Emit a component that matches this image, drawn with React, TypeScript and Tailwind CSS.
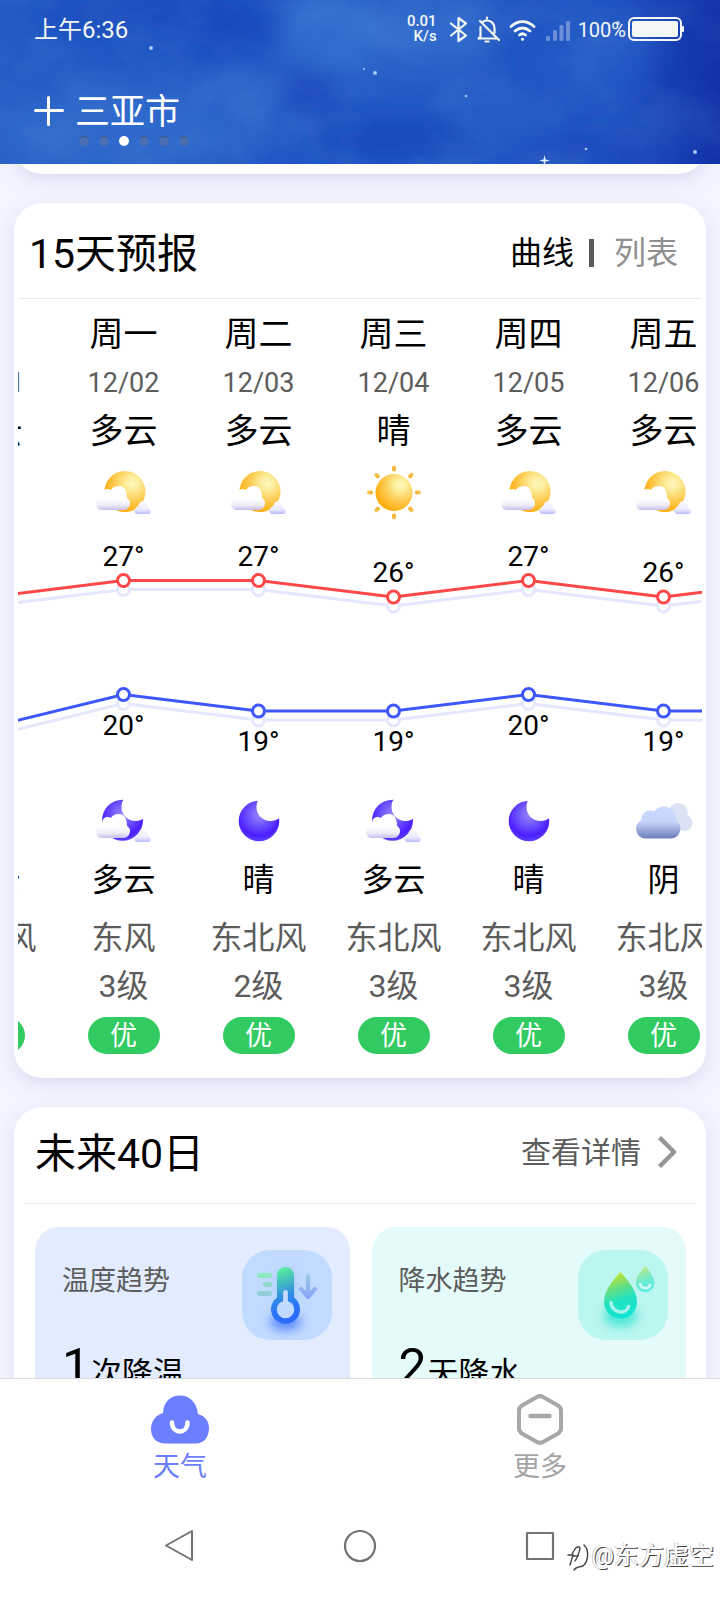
import React from 'react';

type DayIcon = 'sun' | 'sunCloud' | 'moon' | 'moonCloud' | 'overcast';

interface Day {
  week: string;
  date: string;
  dayText: string;
  dayIcon: DayIcon;
  high: number;
  low: number;
  nightIcon: DayIcon;
  nightText: string;
  wind: string;
  level: string;
  air: string;
}

const days: Array<Day> = [
  { week: '周日', date: '12/01', dayText: '多云', dayIcon: 'sunCloud', high: 26, low: 18, nightIcon: 'moonCloud', nightText: '多云', wind: '东北风', level: '3级', air: '优' },
  { week: '周一', date: '12/02', dayText: '多云', dayIcon: 'sunCloud', high: 27, low: 20, nightIcon: 'moonCloud', nightText: '多云', wind: '东风', level: '3级', air: '优' },
  { week: '周二', date: '12/03', dayText: '多云', dayIcon: 'sunCloud', high: 27, low: 19, nightIcon: 'moon', nightText: '晴', wind: '东北风', level: '2级', air: '优' },
  { week: '周三', date: '12/04', dayText: '晴', dayIcon: 'sun', high: 26, low: 19, nightIcon: 'moonCloud', nightText: '多云', wind: '东北风', level: '3级', air: '优' },
  { week: '周四', date: '12/05', dayText: '多云', dayIcon: 'sunCloud', high: 27, low: 20, nightIcon: 'moon', nightText: '晴', wind: '东北风', level: '3级', air: '优' },
  { week: '周五', date: '12/06', dayText: '多云', dayIcon: 'sunCloud', high: 26, low: 19, nightIcon: 'overcast', nightText: '阴', wind: '东北风', level: '3级', air: '优' },
  { week: '周六', date: '12/07', dayText: '多云', dayIcon: 'sunCloud', high: 27, low: 19, nightIcon: 'overcast', nightText: '阴', wind: '东北风', level: '3级', air: '优' },
];

// gradients shared by every weather icon on the page
const IconDefs: React.FC = () => (
  <svg className="absolute size-0" aria-hidden="true">
    <defs>
      <radialGradient id="sunFill" cx="0.68" cy="0.3" r="0.75">
        <stop offset="0" stopColor="#fdf7bd" />
        <stop offset="0.2" stopColor="#fcefa0" />
        <stop offset="0.6" stopColor="#fdc94c" />
        <stop offset="1" stopColor="#ffa908" />
      </radialGradient>
      <linearGradient id="rayFill" x1="0" y1="0" x2="0" y2="1">
        <stop offset="0" stopColor="#f3cd63" />
        <stop offset="1" stopColor="#f2ae23" />
      </linearGradient>
      <radialGradient id="moonFill" cx="0.5" cy="0.35" r="0.65">
        <stop offset="0" stopColor="#9f83ff" />
        <stop offset="0.35" stopColor="#735dfc" />
        <stop offset="0.8" stopColor="#4d1dff" />
        <stop offset="1" stopColor="#5a45fa" />
      </radialGradient>
      <linearGradient id="cloudFill" x1="0" y1="0" x2="0" y2="1">
        <stop offset="0.55" stopColor="#ffffff" />
        <stop offset="0.8" stopColor="#eeebf8" />
        <stop offset="1" stopColor="#c6bde9" />
      </linearGradient>
      <linearGradient id="smallCloudFill" x1="0" y1="0" x2="0" y2="1">
        <stop offset="0" stopColor="#fafaff" />
        <stop offset="0.65" stopColor="#ebeaff" />
        <stop offset="1" stopColor="#b9bafd" />
      </linearGradient>
      <linearGradient id="overcastFill" x1="0" y1="15" x2="0" y2="47" gradientUnits="userSpaceOnUse">
        <stop offset="0" stopColor="#cbdafe" />
        <stop offset="0.5" stopColor="#c5d3f8" />
        <stop offset="1" stopColor="#6d80bb" />
      </linearGradient>
      <mask id="moonMask">
        <rect width="60" height="60" fill="#fff" />
        <circle cx="41.5" cy="16" r="14" fill="#000" />
      </mask>
    </defs>
  </svg>
);

const Clouds: React.FC = () => (
  <>
    <path
      d="M43 51a3 3 0 0 1-2-5c1-2 3-2 4-5 1-3 5-4 7-1 1 2 2 4 3 5 2 2 3 6-1 6z"
      fill="url(#smallCloudFill)"
    />
    <path
      d="M8 47c-4 0-6-3-6-7 0-4 2-6 6-7 0-5 2-7 6-7 2 0 2 1 3 1 2-3 4-4 8-4 6 0 8 5 8 12 2 1 3 3 3 5 0 4-3 7-6 7z"
      fill="url(#cloudFill)"
    />
  </>
);

const WeatherIcon: React.FC<{ name: DayIcon }> = ({ name }) => (
  <svg className="size-15 shrink-0" viewBox="0 0 60 60" aria-hidden="true">
    {name === 'sun' && (
      <>
        <circle cx="30" cy="29.5" r="18.5" fill="url(#sunFill)" />
        {[0, 45, 90, 135, 180, 225, 270, 315].map(angle => (
          <rect
            key={angle}
            x="28"
            y="2.5"
            width="4"
            height="6"
            rx="1.8"
            fill="url(#rayFill)"
            transform={`rotate(${angle} 30 29.5)`}
          />
        ))}
      </>
    )}
    {name === 'sunCloud' && (
      <>
        <circle cx="31" cy="28.5" r="20.5" fill="url(#sunFill)" />
        <Clouds />
      </>
    )}
    {name === 'moon' && (
      <circle cx="30" cy="30" r="20.3" fill="url(#moonFill)" mask="url(#moonMask)" />
    )}
    {name === 'moonCloud' && (
      <>
        <circle cx="28.5" cy="29.3" r="20.5" fill="url(#moonFill)" mask="url(#moonMask)" />
        <Clouds />
      </>
    )}
    {name === 'overcast' && (
      <>
        <g fill="#dbe2f4">
          <circle cx="44" cy="22" r="10" />
          <circle cx="50.5" cy="32" r="8" />
        </g>
        <g fill="url(#overcastFill)">
          <circle cx="30" cy="27.5" r="12" />
          <circle cx="16" cy="28" r="8.5" />
          <rect x="2" y="28" width="44.5" height="19.5" rx="9.7" />
        </g>
      </>
    )}
  </svg>
);

const COLUMN = 135;
const STEP = 16.5;

const chartX = (index: number): number => index * COLUMN + COLUMN / 2;
const highY = (value: number): number => 57.5 + (27 - value) * STEP;
const lowY = (value: number): number => 171.5 + (20 - value) * STEP;

interface SeriesProps {
  ys: Array<number>;
  color: string;
  shadow?: boolean;
}

const Series: React.FC<SeriesProps> = ({ ys, color, shadow }) => (
  <g stroke={color} strokeWidth="3" transform={shadow ? 'translate(0 9)' : undefined}>
    <polyline fill="none" points={ys.map((y, i) => `${chartX(i)},${y}`).join(' ')} />
    {ys.map((y, i) => (
      <circle key={i} cx={chartX(i)} cy={y} r="6" fill="#fff" />
    ))}
  </g>
);

const TemperatureChart: React.FC = () => {
  const highs = days.map(day => highY(day.high));
  const lows = days.map(day => lowY(day.low));

  return (
    <svg className="block h-[268px] w-[945px]" viewBox="0 0 945 268">
      <Series ys={highs} color="#e4e7fe" shadow />
      <Series ys={lows} color="#e4e7fe" shadow />
      <Series ys={highs} color="#fe4747" />
      <Series ys={lows} color="#3d57fd" />
      <g fill="#000" fontSize="28" textAnchor="middle">
        {days.map((day, i) => (
          <React.Fragment key={day.date}>
            <text x={chartX(i)} y={highs[i] - 15}>{`${day.high}°`}</text>
            <text x={chartX(i)} y={lows[i] + 40}>{`${day.low}°`}</text>
          </React.Fragment>
        ))}
      </g>
    </svg>
  );
};

const Sky: React.FC = () => (
  <svg
    className="absolute inset-0 size-full"
    viewBox="0 0 720 164"
    preserveAspectRatio="xMidYMid slice"
    aria-hidden="true"
  >
    <defs>
      <linearGradient id="sky" x1="0" y1="0" x2="1" y2="0">
        <stop offset="0" stopColor="#245bc4" />
        <stop offset="0.3" stopColor="#1f55c2" />
        <stop offset="0.55" stopColor="#245bc5" />
        <stop offset="0.85" stopColor="#1d50bf" />
        <stop offset="1" stopColor="#1130a6" />
      </linearGradient>
      <filter id="soft" x="-50%" y="-50%" width="200%" height="200%">
        <feGaussianBlur stdDeviation="14" />
      </filter>
      <filter id="mist" x="0" y="0" width="100%" height="100%">
        <feTurbulence type="fractalNoise" baseFrequency="0.014 0.02" numOctaves="4" seed="7" />
        <feColorMatrix values="0 0 0 0 0.2  0 0 0 0 0.45  0 0 0 0 0.82  0 1.4 0 0 -0.5" />
      </filter>
    </defs>
    <rect width="720" height="164" fill="url(#sky)" />
    <g filter="url(#soft)">
      <ellipse cx="150" cy="10" rx="110" ry="22" fill="#1446ba" />
      <ellipse cx="215" cy="30" rx="60" ry="24" fill="#164abd" />
      <ellipse cx="120" cy="130" rx="130" ry="42" fill="#2e69cb" />
      <ellipse cx="230" cy="100" rx="50" ry="30" fill="#2a63c9" />
      <ellipse cx="330" cy="30" rx="46" ry="44" fill="#2f6dce" />
      <ellipse cx="430" cy="30" rx="56" ry="36" fill="#2d67cb" />
      <ellipse cx="310" cy="90" rx="30" ry="20" fill="#1a4abb" />
      <ellipse cx="400" cy="140" rx="90" ry="22" fill="#1748ba" />
      <ellipse cx="500" cy="115" rx="60" ry="22" fill="#285ec6" />
      <ellipse cx="590" cy="60" rx="60" ry="40" fill="#2459c4" />
      <ellipse cx="600" cy="155" rx="80" ry="16" fill="#1a4abb" />
    </g>
    <rect width="720" height="164" filter="url(#mist)" opacity="0.2" />
    <g fill="#a9c4f5">
      <circle cx="151" cy="48" r="2" />
      <circle cx="375" cy="73" r="2" />
      <circle cx="364" cy="69" r="1" />
      <circle cx="466" cy="96" r="1.3" />
      <circle cx="586" cy="149" r="1.3" />
      <circle cx="695" cy="152" r="2" />
      <circle cx="618" cy="23" r="2" />
    </g>
    <path d="M544.500 155l1 4.500 4.500 1-4.500 1-1 4.500-1-4.500-4.500-1 4.500-1z" fill="#e6eefc" />
  </svg>
);

const StatusBar: React.FC = () => (
  <div className="flex h-[58px] items-center justify-between pr-9 pl-[34px] text-[#f4f8f4]">
    <span className="pt-0.5 text-2xl">上午6:36</span>
    <div className="flex items-center">
      <div className="flex flex-col items-end text-[15px] leading-[15px] font-medium">
        <span>0.01</span>
        <span>K/s</span>
      </div>
      <svg
        className="ml-3 h-7 w-[97px]"
        viewBox="0 0 97 28"
        fill="none"
        stroke="currentColor"
        strokeWidth="2.2"
        strokeLinecap="round"
        strokeLinejoin="round"
        aria-hidden="true"
      >
        <path d="M2 8.500l15 12L9.500 26V3L17 8.500l-15 12" />
        <path d="M33 7.500c1-1 3-2 5-2 5 0 7.500 4 7.500 8V18M31.500 12V22M29.500 23.500h19M31 6l19 19M38 2.500v1M36.500 26.500h3M31.500 22l-2 1.500" />
        <g strokeWidth="2.8">
          <path d="M62 11.500c7-6.500 16-6.500 23 0M66 16c5-4 10-4 15 0M70.500 20c2-1.600 4-1.600 6 0" />
        </g>
        <circle cx="73.5" cy="24.2" r="1.5" fill="currentColor" stroke="none" />
      </svg>
      <svg className="h-7 w-7" viewBox="0 0 28 28" aria-hidden="true">
        <g fill="#fff" opacity="0.33">
          <rect x="0" y="21" width="4" height="5" rx="1.5" />
          <rect x="7" y="15" width="4" height="11" rx="1.5" />
          <rect x="13.5" y="10" width="4" height="16" rx="1.5" />
          <rect x="20" y="6" width="4" height="20" rx="1.5" />
        </g>
      </svg>
      <span className="ml-1 pt-0.5 text-xl">100%</span>
      <svg className="ml-0.5 h-6 w-14" viewBox="0 0 56 24" aria-hidden="true">
        <rect x="1" y="1" width="52" height="22" rx="5" fill="none" stroke="currentColor" strokeWidth="2" />
        <rect x="4" y="4" width="46" height="16" rx="2" fill="currentColor" />
        <path d="M53 9h2a1 1 0 0 1 1 1v4a1 1 0 0 1-1 1h-2z" fill="currentColor" />
      </svg>
    </div>
  </div>
);

const Header: React.FC = () => (
  <header className="relative h-[164px] shrink-0 overflow-hidden bg-[#2259c4] text-white">
    <Sky />
    <div className="relative">
      <StatusBar />
      <div className="flex h-[106px] items-start gap-[11px] pt-8 pl-[34px]">
        <button type="button" aria-label="添加城市" className="mt-1.5">
          <svg className="size-[30px]" viewBox="0 0 30 30" stroke="#fff" strokeWidth="3" strokeLinecap="round">
            <path d="M14.500 1.500v27M1.500 14.500h27" />
          </svg>
        </button>
        <div className="flex flex-col">
          <h1 className="text-[35px] leading-[46px]">三亚市</h1>
          <div className="flex gap-2.5 pl-1">
            {[0, 1, 2, 3, 4, 5].map(page => (
              <span
                key={page}
                className={
                  page === 2
                    ? 'size-2.5 rounded-full bg-white'
                    : 'size-2.5 rounded-full border-t border-[#39578f] bg-[#4c6eb0]'
                }
              />
            ))}
          </div>
        </div>
      </div>
    </div>
  </header>
);

const ForecastCard: React.FC = () => (
  <section className="rounded-[28px] bg-white px-1 pb-6 shadow-[0_6px_18px_#dadcf0]">
    <div className="flex h-24 items-center justify-between border-b border-[#e6e9f8] pr-6 pl-[11px]">
      <h2 className="pt-2 text-[41px]">15天预报</h2>
      <div className="flex items-center pt-1 text-[32px]">
        <button type="button" className="text-black">
          曲线
        </button>
        <span className="mr-5 ml-[15px] h-7 w-[5px] bg-[#5a5a5a]" />
        <button type="button" className="text-[#8f8f8f]">
          列表
        </button>
      </div>
    </div>
    <div className="overflow-x-auto [scrollbar-width:none]">
      <div className="-ml-[97px] w-[945px]">
        <div className="flex pt-[11px]">
          {days.map(day => (
            <div key={day.date} className="flex w-[135px] flex-col items-center">
              <span className="mb-px text-[34px] leading-12">{day.week}</span>
              <span className="text-[27px] leading-12 text-[#5c5c5c]">{day.date}</span>
              <span className="mb-2 text-[34px] leading-12">{day.dayText}</span>
              <WeatherIcon name={day.dayIcon} />
            </div>
          ))}
        </div>
        <TemperatureChart />
        <div className="flex">
          {days.map(day => (
            <div key={day.date} className="flex w-[135px] flex-col items-center text-[32px] leading-12">
              <WeatherIcon name={day.nightIcon} />
              <span className="mt-[5px] mb-2.5">{day.nightText}</span>
              <span className="text-[#5c5c5c]">{day.wind}</span>
              <span className="text-[#5c5c5c]">{day.level}</span>
              <span className="mt-[7px] h-[37px] w-[72px] rounded-full bg-[#32cb61] text-center text-[27px] leading-[39px] text-white">
                {day.air}
              </span>
            </div>
          ))}
        </div>
      </div>
    </div>
  </section>
);

const ThermometerIcon: React.FC = () => (
  <svg className="size-[90px] rounded-[28px] bg-[#c1daff]" viewBox="0 0 90 90" aria-hidden="true">
    <defs>
      <linearGradient id="thermo" x1="0.3" y1="0" x2="0.5" y2="1">
        <stop offset="0" stopColor="#5cf598" />
        <stop offset="0.5" stopColor="#3390e0" />
        <stop offset="0.75" stopColor="#2b74fb" />
        <stop offset="1" stopColor="#2a6bfd" />
      </linearGradient>
      <linearGradient id="lines" x1="0" y1="23" x2="0" y2="46" gradientUnits="userSpaceOnUse">
        <stop offset="0" stopColor="#8becbd" />
        <stop offset="1" stopColor="#93c9da" />
      </linearGradient>
      <linearGradient id="arrow" x1="0" y1="24" x2="0" y2="49" gradientUnits="userSpaceOnUse">
        <stop offset="0" stopColor="#9dcbdf" />
        <stop offset="0.7" stopColor="#8fadf5" />
        <stop offset="1" stopColor="#8aa7fa" />
      </linearGradient>
      <filter id="glow" x="-50%" y="-50%" width="200%" height="200%">
        <feGaussianBlur stdDeviation="5" />
      </filter>
    </defs>
    <ellipse cx="43.5" cy="72" rx="16" ry="9" fill="#4d7ffb" opacity="0.8" filter="url(#glow)" />
    <rect x="36" y="20" width="16" height="30" rx="8" fill="#7fb6f0" opacity="0.5" filter="url(#glow)" />
    <path
      d="M35 25.500a8.500 8.500 0 0 1 17 0V47.500a14.500 14.500 0 1 1-17 0z"
      fill="url(#thermo)"
    />
    <circle cx="43.5" cy="59.5" r="8.7" fill="#c1daff" />
    <path d="M43.500 42.500V54" stroke="#c1daff" strokeWidth="4.8" strokeLinecap="round" />
    <g fill="url(#lines)">
      <rect x="15" y="23" width="15" height="5" rx="2.5" />
      <rect x="21" y="32" width="9" height="5" rx="2.5" />
      <rect x="15" y="41" width="15" height="5" rx="2.5" />
    </g>
    <path
      d="M66 26v20M59 39l7 8 7-8"
      fill="none"
      stroke="url(#arrow)"
      strokeWidth="4.3"
      strokeLinecap="round"
      strokeLinejoin="round"
    />
  </svg>
);

const DropIcon: React.FC = () => (
  <svg className="size-[90px] rounded-[28px] bg-[#bcf6f0]" viewBox="0 0 90 90" aria-hidden="true">
    <defs>
      <linearGradient id="drop" x1="0.35" y1="0" x2="0.6" y2="1">
        <stop offset="0" stopColor="#d3e626" />
        <stop offset="0.3" stopColor="#6ede77" />
        <stop offset="0.6" stopColor="#22e2c0" />
        <stop offset="1" stopColor="#10e5d8" />
      </linearGradient>
    </defs>
    <ellipse cx="42.5" cy="66" rx="17" ry="11" fill="#2fe3cf" opacity="0.75" filter="url(#glow)" />
    <path d="M42.500 22C36 29 26 40 26 52a16.500 16.500 0 0 0 33 0C59 40 49 29 42.500 22z" fill="url(#drop)" />
    <path
      d="M33 52.500c1 11 15 12.500 17.500 4"
      fill="none"
      stroke="#a5f3ea"
      strokeWidth="3.6"
      strokeLinecap="round"
    />
    <g opacity="0.55">
      <path d="M67.300 16C64 20 58 26 58 33a9.200 9.200 0 0 0 18.400 0C76.400 26 70.500 20 67.300 16z" fill="url(#drop)" />
      <path d="M62 34c1 5 8.500 5.500 10 1" fill="none" stroke="#e5fbf8" strokeWidth="2.6" strokeLinecap="round" />
    </g>
  </svg>
);

interface TrendProps {
  title: string;
  count: number;
  unit: string;
  className: string;
  icon: React.ReactNode;
}

const Trend: React.FC<TrendProps> = ({ title, count, unit, className, icon }) => (
  <a href="#trend" className={`block h-56 flex-1 rounded-3xl pt-[23px] pr-[18px] pl-[27px] ${className}`}>
    <div className="flex items-start justify-between">
      <span className="mt-[11px] text-[27px] leading-10 text-[#5c5c5c]">{title}</span>
      {icon}
    </div>
    <div className="-mt-[3px] flex items-baseline gap-px leading-[60px]">
      <span className="text-[50px]">{count}</span>
      <span className="text-[31px]">{unit}</span>
    </div>
  </a>
);

const OutlookCard: React.FC = () => (
  <section className="rounded-[28px] bg-white pb-6 shadow-[0_6px_18px_#dadcf0]">
    <div className="mx-2.5 flex h-[97px] items-center justify-between border-b border-[#e6e6f6] px-[11px]">
      <h2 className="text-[41px]">未来40日</h2>
      <a href="#detail" className="flex items-center gap-4 pr-2 pb-1.5 text-[30px] text-[#5c5c5c]">
        查看详情
        <svg className="h-8 w-5" viewBox="0 0 20 32" fill="none" stroke="#969696" strokeWidth="4.5" aria-hidden="true">
          <path d="M2.500 1.500L17 16 2.500 30.500" strokeLinejoin="round" />
        </svg>
      </a>
    </div>
    <div className="flex gap-[22px] pt-[23px] pr-5 pl-[21px]">
      <Trend title="温度趋势" count={1} unit="次降温" className="bg-[#e3ecff]" icon={<ThermometerIcon />} />
      <Trend title="降水趋势" count={2} unit="天降水" className="bg-[#e5fbf9]" icon={<DropIcon />} />
    </div>
  </section>
);

const TabBar: React.FC = () => (
  <nav className="flex h-[120px] border-t border-[#dcdce0] bg-white pt-[13px]">
    <a href="#weather" className="flex flex-1 flex-col items-center gap-px text-[27px] leading-10 text-[#6b7fff]">
      <svg className="h-[54px] w-[60px]" viewBox="0 0 60 54" aria-hidden="true">
        <path
          d="M15 51.500C6 51.500 1 45 1 37c0-8 5-14 12-16C13.500 10 20 3.500 30 3.500S47 11 48 22c7 2 11 7 11 14 0 9-5 15.500-13 15.500z"
          fill="#6b7fff"
        />
        <path d="M22 30.500c0 12 15.500 12 15.500 0" fill="none" stroke="#fff" strokeWidth="4.5" strokeLinecap="round" />
      </svg>
      天气
    </a>
    <a href="#more" className="flex flex-1 flex-col items-center gap-px text-[27px] leading-10 text-[#a5a5a5]">
      <svg className="h-[54px] w-[60px]" viewBox="0 0 60 54" fill="none" stroke="#a8a8a8" strokeWidth="4" strokeLinecap="round" aria-hidden="true">
        <path d="M26.500 5.200L12 13.500Q9 15.500 9 18.500V36.500Q9 39.500 12 41.500L26.500 49.800Q30 52 33.500 49.800L48 41.500Q51 39.500 51 36.500V18.500Q51 15.500 48 13.500L33.500 5.200Q30 3 26.500 5.200z" />
        <path d="M20.500 24h19" strokeWidth="4.5" />
      </svg>
      更多
    </a>
  </nav>
);

const SystemBar: React.FC = () => (
  <div className="relative h-[102px] bg-white">
    <div className="flex h-24 items-center px-[12.5%]">
      <button type="button" aria-label="返回" className="flex flex-1 justify-center">
        <svg className="size-9" viewBox="0 0 36 36" fill="none" stroke="#737373" strokeWidth="2" strokeLinejoin="round">
          <path d="M30 3v29L4 17.500z" />
        </svg>
      </button>
      <button type="button" aria-label="主页" className="flex flex-1 justify-center">
        <svg className="size-9" viewBox="0 0 36 36" fill="none" stroke="#737373" strokeWidth="2.2">
          <circle cx="18" cy="18" r="15" />
        </svg>
      </button>
      <button type="button" aria-label="最近任务" className="flex flex-1 justify-center">
        <svg className="size-9" viewBox="0 0 36 36" fill="none" stroke="#737373" strokeWidth="2.2" strokeLinejoin="round">
          <path d="M5 5h26v26H5z" />
        </svg>
      </button>
    </div>
    <div className="absolute right-1.5 bottom-[26px] flex items-center text-[25px] leading-9 text-white [text-shadow:-1px_0_0_#ccc,1px_1px_0_#444]">
      <svg className="mt-1 h-8 w-7" viewBox="0 0 28 32" fill="none" strokeLinecap="round" aria-hidden="true">
        <g stroke="#444" strokeWidth="1.4">
          <path d="M20 3c5 4 5 16-1 21-4 1-7 1-9 4" />
          <path d="M8 12l3-5c2-3 5-3 5 0l-2 6" />
          <path d="M4 13h5l-3 10M9 14h5l-3 5" />
        </g>
      </svg>
      @东方虚空
    </div>
  </div>
);

const App: React.FC = () => (
  <div className="flex h-screen flex-col bg-[#f2f5ff] font-['Roboto','Noto_Sans_CJK_SC',sans-serif] text-black">
    <IconDefs />
    <Header />
    <main className="min-h-0 flex-1 overflow-y-auto px-3.5 [scrollbar-width:none]">
      <div className="-mt-12 h-[58px] rounded-[28px] bg-white shadow-[0_6px_18px_#dadcf0]" />
      <div className="flex flex-col gap-[29px] pt-[29px]">
        <ForecastCard />
        <OutlookCard />
      </div>
    </main>
    <TabBar />
    <SystemBar />
  </div>
);

export default App;
